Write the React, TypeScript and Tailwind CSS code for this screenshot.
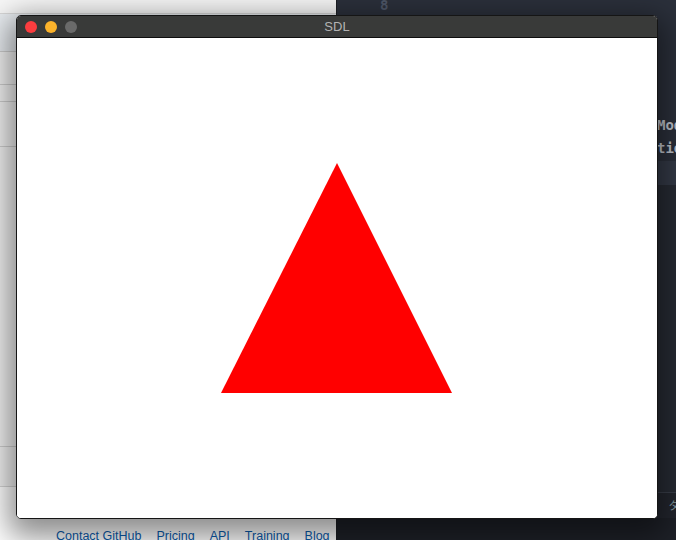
export default function App() {
  return (
    <div className="relative w-[676px] h-[540px] overflow-hidden flex font-['Liberation_Sans',sans-serif]">
      {/* web page behind, left */}
      <div className="w-[337px] shrink-0 h-full flex flex-col bg-[#f6f6f6] border-r border-[#1d1f24]">
        <div className="h-[14px] bg-[#f7f7f7] border-b border-[#d8d8d8]" />
        <div className="h-[38px] bg-[#e9edf1] border-b border-[#cfcfcf]" />
        <div className="h-[33px] bg-[#f3f3f3] border-b border-[#cfcfcf]" />
        <div className="h-[17px] bg-[#f3f3f3] border-b border-[#cfcfcf]" />
        <div className="h-[45px] bg-[#f3f3f3] border-b border-[#d0d0d0]" />
        <div className="h-[300px] bg-[#f3f3f3] border-b border-[#d0d0d0]" />
        <div className="h-[40px] bg-[#f3f3f3] border-b border-[#d6d6d6]" />
        <div className="flex-1 bg-white flex items-end gap-[15px] pl-[56px] -mb-[3px] text-[12.5px] text-[#0b5cad] leading-[14px] whitespace-nowrap">
          <span>Contact GitHub</span>
          <span>Pricing</span>
          <span>API</span>
          <span>Training</span>
          <span>Blog</span>
        </div>
      </div>

      {/* editor behind, right */}
      <div className="flex-1 min-w-0 h-full flex flex-col bg-[#2b303b] font-['DejaVu_Sans_Mono',monospace] overflow-hidden">
        <div className="h-[14px] pl-[43px] text-[14px] leading-[10px] text-[#4e5667] font-bold">8</div>
        <div className="h-[100px]" />
        <div className="h-[24px] pl-[320px] text-[14px] font-bold text-[#c0c5ce] whitespace-nowrap leading-[22px]">Mode</div>
        <div className="h-[23px] pl-[320px] text-[14px] font-bold text-[#c0c5ce] whitespace-nowrap leading-[20px]">tion</div>
        <div className="h-[24px] bg-[#343a47]" />
        <div className="flex-1 bg-[#272b34]" />
        <div className="h-[26px] bg-[#23262e] border-t border-[#3a3f4a] flex items-center gap-6 pl-[24px] text-[11px] text-[#8aa0a8] font-['Noto_Sans_CJK_JP',sans-serif] whitespace-nowrap">
          <span>問題</span>
          <span className="w-[26px] h-[26px] shrink-0 rounded-full bg-[#4d6a73]" />
          <span>出力</span>
          <span>デバッグ コンソール</span>
          <span className="pl-[40px]">ターミナル</span>
        </div>
        <div className="h-[22px] bg-[#1e2128]" />
      </div>

      {/* SDL window */}
      <div className="absolute left-[16px] top-[15px] w-[642px] h-[504px] flex flex-col rounded-[5px] border border-[#151515] bg-white overflow-hidden shadow-[0_10px_30px_8px_rgba(0,0,0,0.45)]">
        <div className="relative h-[22px] flex items-center bg-[#393a39] border-b border-[#0e0e0e]">
          <div className="flex gap-[8px] pl-[8px]">
            <span className="w-[12px] h-[12px] rounded-full bg-[#fc3d3f]" />
            <span className="w-[12px] h-[12px] rounded-full bg-[#fcb32b]" />
            <span className="w-[12px] h-[12px] rounded-full bg-[#6a6a6a]" />
          </div>
          <div className="absolute inset-0 flex items-center justify-center text-[13px] text-[#b3b3b3]">SDL</div>
        </div>
        <div className="flex-1 bg-white">
          <svg width="640" height="480" viewBox="0 0 640 480">
            <polygon points="320,125 204,355 435,355" fill="#ff0000" />
          </svg>
        </div>
      </div>
    </div>
  );
}
